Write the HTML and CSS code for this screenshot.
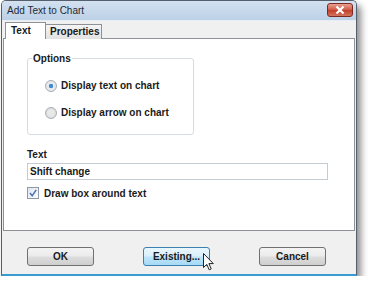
FILE: index.html
```html
<!DOCTYPE html>
<html lang="en">
<head>
    <meta charset="UTF-8">
    <title>Add Text to Chart</title>
    <link rel="stylesheet" href="styles.css">
</head>
<body>
    <div class="window">
        <div class="titlebar">
            <span class="title">Add Text to Chart</span>
            <span class="close-btn">
                <svg width="10" height="8" viewBox="0 0 10 8"><path d="M1.5 0.5 L8.5 7.5 M8.5 0.5 L1.5 7.5" stroke="#fff" stroke-width="2.2"/></svg>
            </span>
        </div>

        <div class="tabs">
            <div class="tab active">Text</div>
            <div class="tab">Properties</div>
        </div>

        <div class="panel">
            <fieldset class="group">
                <legend>Options</legend>
                <label class="option"><span class="radio checked"></span>Display text on chart</label>
                <label class="option"><span class="radio"></span>Display arrow on chart</label>
            </fieldset>

            <div class="field-label">Text</div>
            <div class="text-input">Shift change</div>

            <label class="check-row">
                <span class="checkbox">
                    <svg width="10" height="10" viewBox="0 0 10 10"><path d="M2 5 L4.2 7.8 L8.2 1.8" fill="none" stroke="#4a6fae" stroke-width="1.5"/></svg>
                </span>
                Draw box around text
            </label>
        </div>

        <div class="buttons">
            <div class="btn">OK</div>
            <div class="btn hover">Existing...
                <svg class="cursor" width="12" height="18" viewBox="0 0 12 18"><path d="M0.5 0.5 L0.5 14.5 L3.8 11.4 L6.2 16.8 L8.2 15.9 L5.9 10.6 L10.3 10.6 Z" fill="#fff" stroke="#222" stroke-width="1"/></svg>
            </div>
            <div class="btn">Cancel</div>
        </div>
    </div>
</body>
</html>
```

FILE: styles.css
```css
body { margin: 0; background-color: #fff; font-family: "Liberation Sans", Arial, sans-serif; font-size: 10px; color: #1a1a1a; }

.window { margin-left: 1px; width: 356px; height: 276px; border: 1px solid #56606c; border-bottom: 2px solid #3a9bd0; border-radius: 5px 5px 0 0; background-color: #f0f0f0; display: flex; flex-direction: column; box-shadow: 4px 5px 7px rgba(0,0,0,0.45); box-sizing: border-box; }

.titlebar { height: 19px; display: flex; align-items: center; justify-content: space-between; padding: 0 3px 0 5px; background: linear-gradient(#d3e1f0, #bcd0e7); border-radius: 4px 4px 0 0; border-bottom: 1px solid #e7edf4; }
.title { color: #1e2a36; font-size: 10px; }
.close-btn { width: 26px; height: 14px; display: flex; align-items: center; justify-content: center; border: 1px solid #7a2a22; border-radius: 3px; background: linear-gradient(#e8a193 0%, #d4604d 45%, #c2402b 55%, #d4765f 100%); box-sizing: border-box; margin-top: -2px; }

.tabs { display: flex; align-items: flex-end; padding-left: 3px; margin-top: 1px; margin-bottom: -1px; position: relative; z-index: 1; }
.tab { height: 14px; padding: 0 3px 0 4px; border: 1px solid #8e9196; border-bottom: none; background: linear-gradient(#f4f4f4, #e2e2e2); font-weight: bold; line-height: 14px; width: 48px; }
.tab.active { height: 16px; width: 31px; padding-left: 5px; background-color: #fff; background-image: none; line-height: 15px; margin-right: -1px; position: relative; z-index: 2; }

.panel { height: 193px; margin: 0 1px; background-color: #fff; border: 1px solid #8e9196; box-sizing: border-box; padding: 0 0 0 23px; }

.group { width: 167px; height: 82px; margin: 14px 0 0; padding: 8px 0 0 0; border: 1px solid #d5dde4; border-radius: 3px; box-sizing: border-box; }
.group legend { font-weight: bold; padding: 0 1px; margin-left: 4px; }

.option { display: flex; align-items: center; font-weight: bold; height: 27px; padding-left: 17px; }
.radio { width: 10px; height: 10px; border: 1px solid #a9adb3; border-radius: 50%; margin-right: 4px; background: radial-gradient(circle, #e8e8e8 40%, #d0d0d0 100%); }
.radio.checked { background: radial-gradient(circle, #3d8bd0 0 28%, #e6eaee 34% 60%, #cfd3d8 100%); }

.field-label { font-weight: bold; margin-top: 14px; height: 12px; }
.text-input { width: 301px; height: 17px; margin-top: 2px; border: 1px solid #c3ccd5; box-sizing: border-box; padding-left: 2px; line-height: 15px; font-weight: bold; }

.check-row { display: flex; align-items: center; font-weight: bold; margin-top: 7px; }
.checkbox { width: 12px; height: 12px; border: 1px solid #8f99a6; box-sizing: border-box; margin-right: 5px; display: flex; align-items: center; justify-content: center; background: linear-gradient(135deg, #dfe6ee, #fbfcfd); }

.buttons { display: flex; gap: 49px; padding: 16px 0 0 25px; }
.btn { width: 67px; height: 19px; border: 1px solid #707070; border-radius: 3px; box-sizing: border-box; background: linear-gradient(#f3f3f3 0%, #ebebeb 48%, #dddddd 52%, #cfcfcf 100%); font-weight: bold; text-align: center; line-height: 17px; position: relative; }
.btn.hover { border-color: #3c7fb1; background: linear-gradient(#eaf6fd 0%, #d9f0fc 48%, #bee6fd 52%, #a7d9f5 100%); }
.cursor { position: absolute; left: 59px; top: 5px; }
```
